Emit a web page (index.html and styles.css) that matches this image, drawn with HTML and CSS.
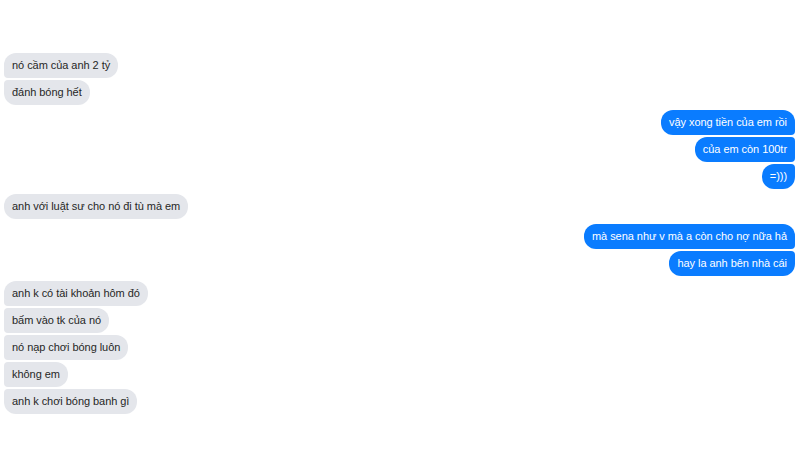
FILE: index.html
```html
<!DOCTYPE html>
<html lang="vi">
<head>
    <meta charset="UTF-8">
    <title>Tin nhắn</title>
    <link rel="stylesheet" href="styles.css">
</head>
<body>
    <div class="chat">
        <div class="group them">
            <div class="msg">nó cầm của anh 2 tỷ</div>
            <div class="msg">đánh bóng hết</div>
        </div>
        <div class="group me">
            <div class="msg">vậy xong tiền của em rồi</div>
            <div class="msg">của em còn 100tr</div>
            <div class="msg">=)))</div>
        </div>
        <div class="group them">
            <div class="msg">anh với luật sư cho nó đi tù mà em</div>
        </div>
        <div class="group me">
            <div class="msg">mà sena như v mà a còn cho nợ nữa hả</div>
            <div class="msg">hay la anh bên nhà cái</div>
        </div>
        <div class="group them">
            <div class="msg">anh k có tài khoản hôm đó</div>
            <div class="msg">bấm vào tk của nó</div>
            <div class="msg">nó nạp chơi bóng luôn</div>
            <div class="msg">không em</div>
            <div class="msg">anh k chơi bóng banh gì</div>
        </div>
    </div>
</body>
</html>
```

FILE: styles.css
```css
body {
    margin: 0;
    padding: 0;
    background: #fff;
    font-family: "Liberation Sans", Arial, sans-serif;
}

.chat {
    width: 800px;
    height: 450px;
    box-sizing: border-box;
    padding: 53px 5px 0 4px;
    display: flex;
    flex-direction: column;
    gap: 5px;
}

.group {
    display: flex;
    flex-direction: column;
    gap: 2px;
}

.group.them { align-items: flex-start; }
.group.me { align-items: flex-end; }

.msg {
    height: 25px;
    line-height: 25px;
    padding: 0 8px;
    font-size: 11px;
    letter-spacing: -0.05px;
    border-radius: 12px;
    white-space: nowrap;
}

.them .msg {
    background: #e4e6eb;
    color: #262626;
}

.me .msg {
    background: #0a7cff;
    color: #fff;
}

.them .msg:not(:first-child) { border-top-left-radius: 4px; }
.them .msg:not(:last-child) { border-bottom-left-radius: 4px; }
.me .msg:not(:first-child) { border-top-right-radius: 4px; }
.me .msg:not(:last-child) { border-bottom-right-radius: 4px; }
```
